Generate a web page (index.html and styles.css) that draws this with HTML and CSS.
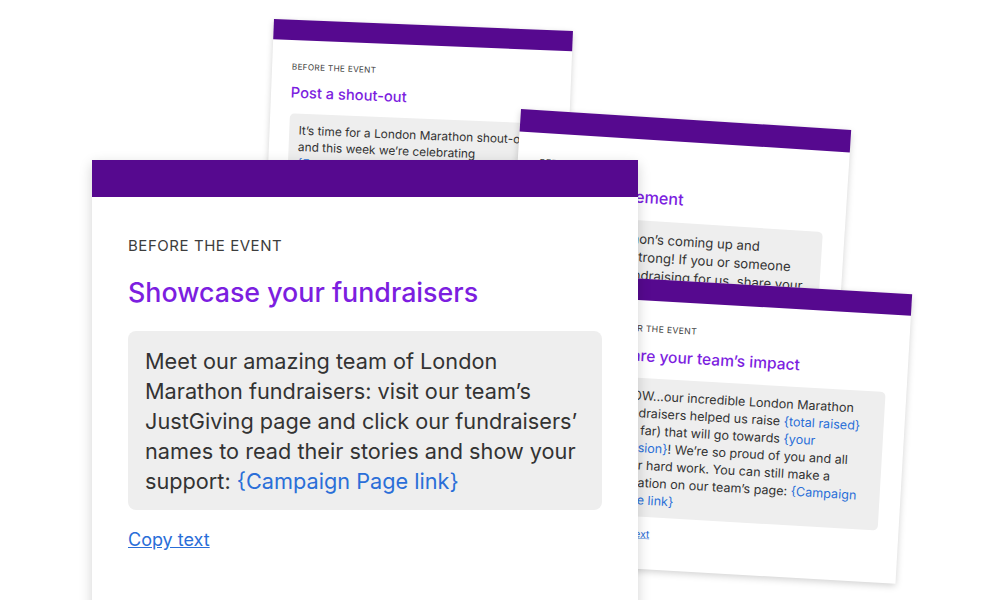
FILE: index.html
```html
<!DOCTYPE html>
<html lang="en">
<head>
<meta charset="utf-8">
<title>Fundraising message templates</title>
<link rel="stylesheet" href="styles.css">
</head>
<body>
<div class="stage">
  <article class="card card-shout">
    <div class="card-bar"></div>
    <div class="card-body">
      <p class="card-label">BEFORE THE EVENT</p>
      <h2 class="card-title">Post a shout-out</h2>
      <div class="card-message">It’s time for a London Marathon shout-out and this week we’re celebrating <span class="token">{Fundraiser Name}</span>, who is running to support our cause. Read their story here: <span class="token">{Fundraising Page link}</span></div>
      <a class="copy-link" href="#">Copy text</a>
    </div>
  </article>

  <article class="card card-engage">
    <div class="card-bar"></div>
    <div class="card-body">
      <p class="card-label">BEFORE THE EVENT</p>
      <h2 class="card-title">Boost engagement</h2>
      <div class="card-message">London Marathon’s coming up and momentum is strong! If you or someone you know is fundraising for us, share your story with us and help spread the word: <span class="token">{Campaign Page link}</span></div>
      <a class="copy-link" href="#">Copy text</a>
    </div>
  </article>

  <article class="card card-impact">
    <div class="card-bar"></div>
    <div class="card-body">
      <p class="card-label">AFTER THE EVENT</p>
      <h2 class="card-title">Share your team’s impact</h2>
      <div class="card-message">WOW...our incredible London Marathon fundraisers helped us raise <span class="token">{total raised}</span> (so far) that will go towards <span class="token">{your mission}</span>! We’re so proud of you and all your hard work. You can still make a donation on our team’s page: <span class="token">{Campaign Page link}</span></div>
      <a class="copy-link" href="#">Copy text</a>
    </div>
  </article>

  <article class="card card-showcase">
    <div class="card-bar"></div>
    <div class="card-body">
      <p class="card-label">BEFORE THE EVENT</p>
      <h2 class="card-title">Showcase your fundraisers</h2>
      <div class="card-message">Meet our amazing team of London Marathon fundraisers: visit our team’s JustGiving page and click our fundraisers’ names to read their stories and show your support: <span class="token">{Campaign Page link}</span></div>
      <a class="copy-link" href="#">Copy text</a>
    </div>
  </article>
</div>
</body>
</html>
```

FILE: styles.css
```css
* { box-sizing: border-box; }

html, body {
  margin: 0;
  padding: 0;
  background: #ffffff;
}

body {
  font-family: Inter, "Noto Sans", "Liberation Sans", sans-serif;
}

.stage {
  position: relative;
  width: 1000px;
  height: 600px;
  overflow: hidden;
  background: #ffffff;
}

.card {
  position: absolute;
  width: 546px;
  height: 500px;
  background: #ffffff;
  transform-origin: 0 0;
  box-shadow: 0 4px 12px rgba(0, 0, 0, 0.18);
}

.card-shout {
  left: 274px;
  top: 19px;
  transform: rotate(2.3deg) scale(0.548);
}

.card-engage {
  left: 521px;
  top: 109px;
  transform: rotate(3.64deg) scale(0.606);
}

.card-impact {
  left: 596px;
  top: 276px;
  transform: rotate(3.3deg) scale(0.58);
}

.card-showcase {
  left: 92px;
  top: 160px;
}

.card-bar {
  height: 37px;
  background: #56098f;
}

.card-body {
  padding: 39px 36px 36px;
}

.card-label {
  margin: 0;
  font-size: 15px;
  line-height: 20px;
  color: #3d3d3d;
  letter-spacing: 0.55px;
}

.card-title {
  margin: 20px 0 0;
  font-size: 26.8px;
  line-height: 32px;
  font-weight: 500;
  color: #7c1ee0;
}

.card-message {
  margin-top: 23px;
  padding: 15px 17px 14px;
  background: #eeeeee;
  border-radius: 8px;
  font-size: 21.7px;
  line-height: 30px;
  color: #333333;
}

.token {
  color: #2a6ed8;
}

.copy-link {
  display: inline-block;
  margin-top: 18px;
  font-size: 18px;
  line-height: 24px;
  color: #2a6ed8;
  text-decoration: underline;
}
```
